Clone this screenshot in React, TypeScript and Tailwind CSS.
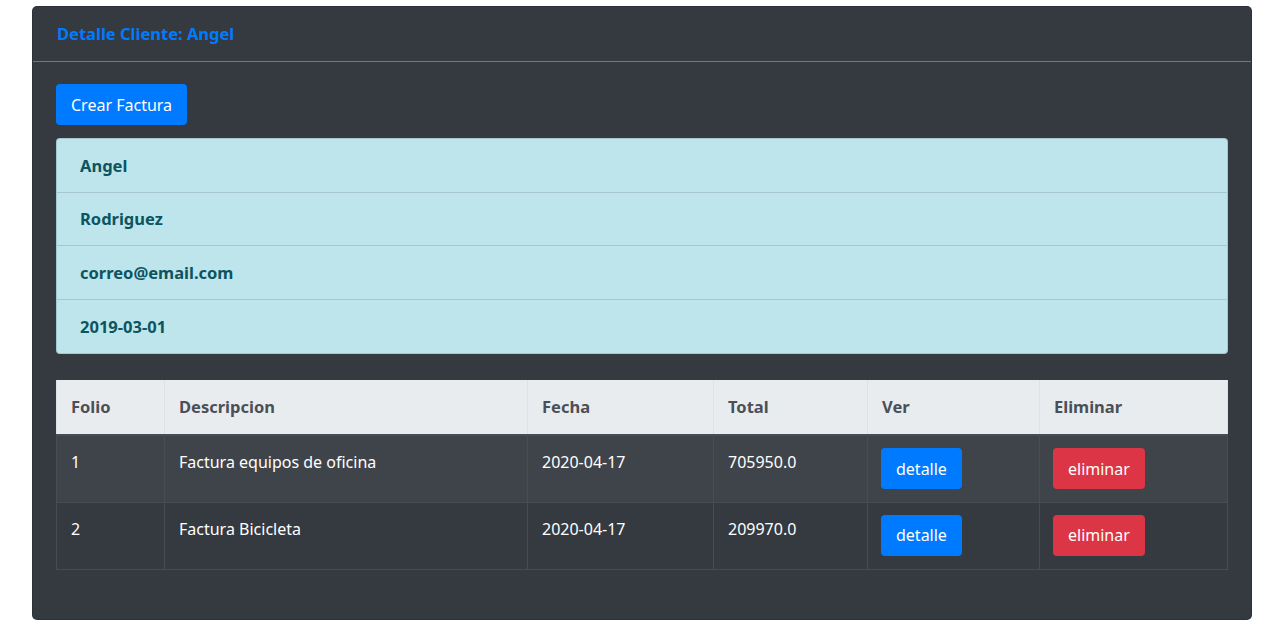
import React from 'react';

const cliente = [
  { texto: 'Angel', alto: 'h-[53px]' },
  { texto: 'Rodriguez', alto: 'h-[53px]' },
  { texto: 'correo@email.com', alto: 'h-[54px]' },
  { texto: '2019-03-01', alto: 'h-[54px]' },
];

const facturas = [
  { folio: 1, descripcion: 'Factura equipos de oficina', fecha: '2020-04-17', total: '705950.0' },
  { folio: 2, descripcion: 'Factura Bicicleta', fecha: '2020-04-17', total: '209970.0' },
];

const headers = ['Folio', 'Descripcion', 'Fecha', 'Total', 'Ver', 'Eliminar'];
const widths = ['w-[108px]', 'w-[363px]', 'w-[186px]', 'w-[154px]', 'w-[172px]', 'w-[188px]'];

export default function App() {
  return (
    <div className="min-h-screen bg-white pt-[6px] pl-[32px] font-['Noto_Sans',_'Liberation_Sans',_sans-serif] text-[16px] leading-[24px]">
      <div className="w-[1220px] h-[614px] bg-[#343a40] border border-[rgba(0,0,0,0.125)] rounded-[5px]">
        {/* cabecera */}
        <div className="h-[55px] px-[24px] flex items-center border-b border-b-[#28a745]">
          <h5 className="text-[#007bff] font-bold text-[16.5px]">Detalle Cliente: Angel</h5>
        </div>

        <div className="px-[23px] pt-[22px]">
          <button className="h-[41px] px-[15px] rounded-[4px] bg-[#007bff] text-white">
            Crear Factura
          </button>

          <ul className="mt-[13px] rounded-[4px] border border-[rgba(0,0,0,0.125)] bg-[#bee5eb] text-[#0c5460] font-bold text-[16.5px]">
            {cliente.map((item, i) => (
              <li
                key={item.texto}
                className={`${item.alto} px-[23px] flex items-center ${i > 0 ? 'border-t border-[rgba(0,0,0,0.125)]' : ''}`}
              >
                {item.texto}
              </li>
            ))}
          </ul>

          <table className="mt-[26px] w-[1171px] table-fixed border-collapse">
            <thead>
              <tr className="bg-[#e9ecef] text-[#495057]">
                {headers.map((h, i) => (
                  <th
                    key={h}
                    className={`${widths[i]} h-[55px] px-[14px] text-left font-bold text-[16.5px] border-x border-[#dee2e6] border-b-2 border-b-[#454d55]`}
                  >
                    {h}
                  </th>
                ))}
              </tr>
            </thead>
            <tbody className="text-white">
              {facturas.map((f, i) => (
                <tr key={f.folio} className={i % 2 === 0 ? 'bg-[#3f444a]' : 'bg-[#343a40]'}>
                  <td className="h-[67px] px-[14px] pt-[14px] align-top border border-[#454d55]">{f.folio}</td>
                  <td className="px-[14px] pt-[14px] align-top border border-[#454d55]">{f.descripcion}</td>
                  <td className="px-[14px] pt-[14px] align-top border border-[#454d55]">{f.fecha}</td>
                  <td className="px-[14px] pt-[14px] align-top border border-[#454d55]">{f.total}</td>
                  <td className="px-[13px] pt-[12px] align-top border border-[#454d55]">
                    <button className="h-[41px] px-[15px] rounded-[4px] bg-[#007bff] text-white">detalle</button>
                  </td>
                  <td className="px-[13px] pt-[12px] align-top border border-[#454d55]">
                    <button className="h-[41px] px-[15px] rounded-[4px] bg-[#dc3545] text-white">eliminar</button>
                  </td>
                </tr>
              ))}
            </tbody>
          </table>
        </div>
      </div>
    </div>
  );
}
